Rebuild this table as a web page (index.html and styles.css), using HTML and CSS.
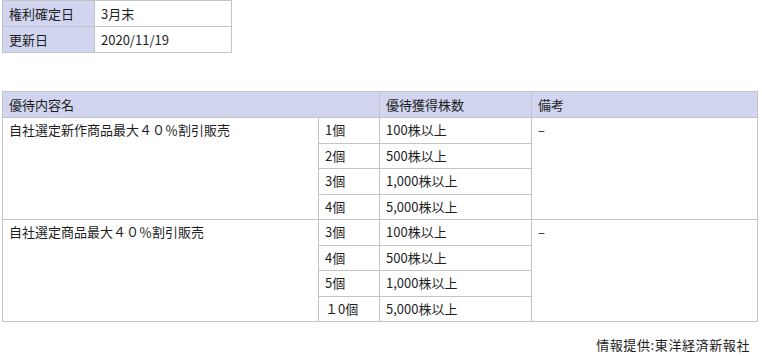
FILE: index.html
```html
<!DOCTYPE html>
<html lang="ja">
<head>
  <meta charset="UTF-8" />
  <meta name="viewport" content="width=device-width, initial-scale=1.0"/>
  <title>株主優待</title>
  <link rel="stylesheet" href="styles.css">
</head>
<body>
  <div class="yutai-container">
    <table class="info-table">
      <tr>
        <th>権利確定日</th>
        <td>3月末</td>
      </tr>
      <tr>
        <th>更新日</th>
        <td>2020/11/19</td>
      </tr>
    </table>

    <table class="yutai-table">
      <colgroup>
        <col class="col-name">
        <col class="col-count">
        <col class="col-shares">
        <col class="col-note">
      </colgroup>
      <thead>
        <tr>
          <th colspan="2">優待内容名</th>
          <th>優待獲得株数</th>
          <th>備考</th>
        </tr>
      </thead>
      <tbody>
        <tr>
          <td rowspan="4" class="top">自社選定新作商品最大４０％割引販売</td>
          <td>1個</td>
          <td>100株以上</td>
          <td rowspan="4" class="top">–</td>
        </tr>
        <tr><td>2個</td><td>500株以上</td></tr>
        <tr><td>3個</td><td>1,000株以上</td></tr>
        <tr><td>4個</td><td>5,000株以上</td></tr>
        <tr>
          <td rowspan="4" class="top">自社選定商品最大４０％割引販売</td>
          <td>3個</td>
          <td>100株以上</td>
          <td rowspan="4" class="top">–</td>
        </tr>
        <tr><td>4個</td><td>500株以上</td></tr>
        <tr><td>5個</td><td>1,000株以上</td></tr>
        <tr><td>１0個</td><td>5,000株以上</td></tr>
      </tbody>
    </table>

    <p class="credit">情報提供:東洋経済新報社</p>
  </div>
</body>
</html>
```

FILE: styles.css
```css
body {
  font-family: 'Noto Sans CJK JP', 'Liberation Sans', sans-serif;
  font-size: 13px;
  color: #1e1e1e;
  background-color: #fff;
  margin: 0;
  padding: 0;
}

.yutai-container {
  width: 754px;
  padding: 0 0 0 2px;
}

table {
  border-collapse: collapse;
}

th, td {
  border: 1px solid #c4c4c4;
  height: 25px;
  padding: 0 6px;
  font-weight: normal;
  text-align: left;
  line-height: 16px;
  white-space: nowrap;
}

th {
  background-color: #d1d5f0;
}

.info-table th {
  width: 79px;
}

.info-table td {
  width: 124px;
}

.yutai-table {
  width: 755px;
  margin-top: 38px;
  table-layout: fixed;
}

.yutai-table tbody td {
  height: 24.5px;
}

.col-name { width: 316px; }
.col-count { width: 61px; }
.col-shares { width: 152px; }
.col-note { width: 226px; }

.yutai-table td.top {
  vertical-align: top;
  padding-top: 4px;
}

.credit {
  margin: 15px 0 0;
  padding-right: 6px;
  line-height: 16px;
  letter-spacing: 0.6px;
  text-align: right;
}
```
